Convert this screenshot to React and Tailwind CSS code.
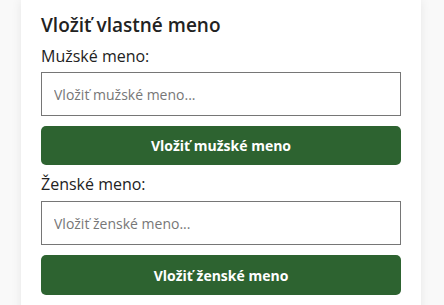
export default function App() {
  return (
    <div className="h-[305px] w-[444px] overflow-hidden bg-[#f9f9f9] font-['Open_Sans',sans-serif]">
      <div className="ml-[21px] w-[400px] bg-white px-5 pt-[12px] pb-5 shadow-[0_0_10px_rgba(0,0,0,0.08)]">
        <h2 className="text-[19px] font-semibold leading-[26px] text-[#222]">Vložiť vlastné meno</h2>
        <label className="mt-[6px] block text-[16px] leading-[24px] text-[#222]">Mužské meno:</label>
        <input
          className="mt-[4px] block h-[44px] w-full border border-[#767676] px-3 text-[14px] text-[#222] placeholder:text-[#777] outline-none"
          placeholder="Vložiť mužské meno..."
        />
        <button className="mt-[10px] block h-[39px] w-full rounded-[5px] bg-[#2d6330] text-[14px] font-bold text-white">
          Vložiť mužské meno
        </button>
        <label className="mt-[7px] block text-[16px] leading-[24px] text-[#222]">Ženské meno:</label>
        <input
          className="mt-[5px] block h-[44px] w-full border border-[#767676] px-3 text-[14px] text-[#222] placeholder:text-[#777] outline-none"
          placeholder="Vložiť ženské meno..."
        />
        <button className="mt-[10px] block h-[40px] w-full rounded-[5px] bg-[#2d6330] text-[14px] font-bold text-white">
          Vložiť ženské meno
        </button>
      </div>
    </div>
  );
}
